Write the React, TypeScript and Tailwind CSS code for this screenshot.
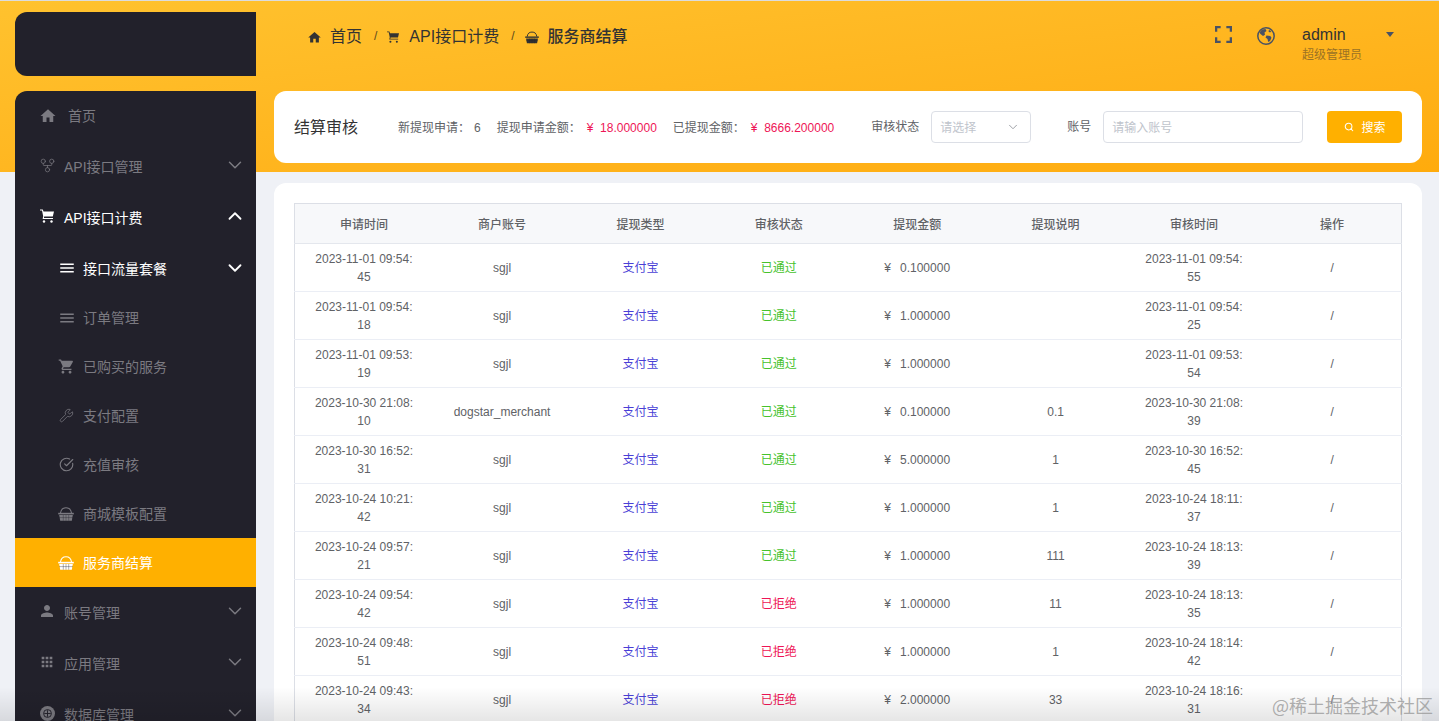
import { ChevronDown, ChevronUp, CircleCheckBig, GitFork, Search, Wrench } from 'lucide-react';
import { MdApps, MdHome, MdMenu, MdPerson, MdShoppingCart } from 'react-icons/md';

function Basket({ className }: { className?: string }) {
  return (
    <svg viewBox="0 0 16 14" className={className} fill="none" stroke="currentColor">
      <path d="M2.500 6C3 2.200 5 0.800 8 0.800s5 1.400 5.500 5.200" strokeWidth="1.100" />
      <path d="M0.200 6.600h15.600" strokeWidth="1.600" />
      <path d="M1.200 8h13.600l-1 5.700H2.200z" fill="currentColor" stroke="none" />
      <path d="M1.200 10.600h13.600M5.300 8v5.700M8 8v5.700M10.700 8v5.700" stroke="#22212b" strokeWidth="0.500" opacity="0.700" />
    </svg>
  );
}

function Cart({ className }: { className?: string }) {
  return (
    <svg viewBox="0 0 14 14" className={className} fill="currentColor">
      <path d="M0 0.500h2.800l0.700 2h10.500l-1.200 5H4.200l-0.300 1.500h9.100v1H2.600l0.600-2.800L2 1.500H0z" />
      <circle cx="4" cy="12.500" r="1.200" />
      <circle cx="11.500" cy="12.500" r="1.200" />
    </svg>
  );
}

function Database({ className }: { className?: string }) {
  return (
    <svg viewBox="0 0 16 16" className={className}>
      <circle cx="8" cy="8" r="8" fill="currentColor" />
      <circle cx="8" cy="8" r="4.200" fill="none" stroke="#22212b" strokeWidth="1" />
      <path d="M8 4.500v7M4.500 8h7" stroke="#22212b" strokeWidth="1" />
    </svg>
  );
}

function Fullscreen({ className }: { className?: string }) {
  return (
    <svg viewBox="0 0 18 18" className={className} fill="none" stroke="currentColor" strokeWidth="2.400">
      <path d="M1.200 6V1.200H6M12 1.200h4.800V6M16.800 12v4.800H12M6 16.800H1.200V12" />
    </svg>
  );
}

function Globe({ className }: { className?: string }) {
  return (
    <svg viewBox="0 0 18 18" className={className} fill="currentColor">
      <circle cx="9" cy="9" r="8.200" fill="none" stroke="currentColor" strokeWidth="1.500" />
      <path d="M5 2.500l3.500-0.500 1 2-2 1.500 0.500 2.200-2 1.200L3.500 7 2.500 5.500z" />
      <path d="M9.500 8.500l3.800 0.500 1.200 1.800-1.500 3.200-1.800 1-0.700-3-2-1.500z" />
      <path d="M12 2.800l2.200 1.600-1.200 1.200-1.500-1z" />
    </svg>
  );
}

const subItems = [
  { label: '订单管理', icon: <MdMenu className="w-[18px] h-[18px] -ml-[1px]" /> },
  { label: '已购买的服务', icon: <MdShoppingCart className="w-[17px] h-[17px] -ml-[1px]" /> },
  { label: '支付配置', icon: <Wrench className="w-[15px] h-[15px]" strokeWidth={1.200} /> },
  { label: '充值审核', icon: <CircleCheckBig className="w-[15px] h-[15px]" strokeWidth={1.800} /> },
  { label: '商城模板配置', icon: <Basket className="w-[16px] h-[14px] -ml-[1px]" /> },
];

const columns = ['申请时间', '商户账号', '提现类型', '审核状态', '提现金额', '提现说明', '审核时间', '操作'];

const rows = [
  { applied: '2023-11-01 09:54:45', account: 'sgjl', ok: true, amount: '0.100000', note: '', reviewed: '2023-11-01 09:54:55' },
  { applied: '2023-11-01 09:54:18', account: 'sgjl', ok: true, amount: '1.000000', note: '', reviewed: '2023-11-01 09:54:25' },
  { applied: '2023-11-01 09:53:19', account: 'sgjl', ok: true, amount: '1.000000', note: '', reviewed: '2023-11-01 09:53:54' },
  { applied: '2023-10-30 21:08:10', account: 'dogstar_merchant', ok: true, amount: '0.100000', note: '0.1', reviewed: '2023-10-30 21:08:39' },
  { applied: '2023-10-30 16:52:31', account: 'sgjl', ok: true, amount: '5.000000', note: '1', reviewed: '2023-10-30 16:52:45' },
  { applied: '2023-10-24 10:21:42', account: 'sgjl', ok: true, amount: '1.000000', note: '1', reviewed: '2023-10-24 18:11:37' },
  { applied: '2023-10-24 09:57:21', account: 'sgjl', ok: true, amount: '1.000000', note: '111', reviewed: '2023-10-24 18:13:39' },
  { applied: '2023-10-24 09:54:42', account: 'sgjl', ok: false, amount: '1.000000', note: '11', reviewed: '2023-10-24 18:13:35' },
  { applied: '2023-10-24 09:48:51', account: 'sgjl', ok: false, amount: '1.000000', note: '1', reviewed: '2023-10-24 18:14:42' },
  { applied: '2023-10-24 09:43:34', account: 'sgjl', ok: false, amount: '2.000000', note: '33', reviewed: '2023-10-24 18:16:31' },
];

function TopItem({ label, icon, open, active }: { label: string; icon: React.ReactNode; open?: boolean; active?: boolean }) {
  return (
    <div className={`flex items-center h-[51px] pl-[25px] pr-[10px] ${active ? 'text-white' : 'text-[#7b7a81]'}`}>
      <span className="w-[24px] flex items-center -mt-[3px]">{icon}</span>
      <span className="flex-1 text-sm mt-[1px]">{label}</span>
      {open ? (
        <ChevronUp className="w-[22px] h-[22px] -mt-[3px]" strokeWidth={2} />
      ) : (
        <ChevronDown className="w-[22px] h-[22px] -mt-[3px]" strokeWidth={1.600} />
      )}
    </div>
  );
}

export default function App() {
  return (
    <div className="relative h-screen overflow-hidden bg-[#eff1f6] font-['Liberation_Sans','Noto_Sans_CJK_SC',sans-serif]">
      {/* Yellow band behind everything */}
      <div className="absolute inset-x-0 top-0 h-[172px] bg-gradient-to-br from-[#ffc22e] to-[#ffab0c] border-t border-[#dcdcdc]" />

      <div className="relative flex h-full">
        {/* Sidebar */}
        <aside className="ml-[15px] w-[241px] pt-3 flex flex-col gap-[15px] shrink-0">
          <div className="h-16 shrink-0 bg-[#22212b] rounded-l-xl" />
          <nav className="flex-1 min-h-0 overflow-hidden bg-[#22212b] rounded-tl-xl">
            <div className="flex items-center h-[50px] pl-6 text-[#7b7a81]">
              <MdHome className="w-[18px] h-[18px]" />
              <span className="ml-[11px] text-sm">首页</span>
            </div>
            <TopItem label="API接口管理" icon={<GitFork className="w-[17px] h-[17px] -ml-[1px]" strokeWidth={1} />} />
            <TopItem label="API接口计费" icon={<Cart className="w-[14px] h-[14px]" />} open active />
            <div className="flex items-center h-[50px] pl-[44px] pr-[10px] text-white">
              <span className="w-[24px] flex items-center"><MdMenu className="w-[18px] h-[18px] -ml-[1px]" /></span>
              <span className="flex-1 text-sm mt-[1px]">接口流量套餐</span>
              <ChevronDown className="w-[22px] h-[22px] -mt-[1px]" strokeWidth={2} />
            </div>
            {subItems.map((item) => (
              <div key={item.label} className="flex items-center h-[49px] pl-[44px] text-[#7b7a81]">
                <span className="w-[24px] flex items-center">{item.icon}</span>
                <span className="text-sm">{item.label}</span>
              </div>
            ))}
            <div className="flex items-center h-[49px] pl-[44px] bg-[#ffb000] text-white">
              <span className="w-[24px] flex items-center"><Basket className="w-[16px] h-[14px] -ml-[1px]" /></span>
              <span className="text-sm">服务商结算</span>
            </div>
            <TopItem label="账号管理" icon={<MdPerson className="w-[18px] h-[18px] -ml-[2px]" />} />
            <TopItem label="应用管理" icon={<MdApps className="w-[16px] h-[16px] -ml-[1px]" />} />
            <TopItem label="数据库管理" icon={<Database className="w-[15px] h-[15px]" />} />
          </nav>
        </aside>

        <main className="ml-[18px] w-[1148px] flex flex-col">
          {/* Top bar */}
          <header className="h-[91px] shrink-0 flex items-start pt-[25px] pl-[33px] text-[#333]">
            <div className="flex items-center h-[22px] mt-[1px] text-base">
              <MdHome className="w-[15px] h-[15px]" />
              <span className="ml-2">首页</span>
              <span className="ml-3 mr-[10px] text-xs text-[#5c4a1c] -mt-[3px]">/</span>
              <Cart className="w-[12px] h-[12px]" />
              <span className="ml-[10px]">API接口计费</span>
              <span className="ml-3 mr-[10px] text-xs text-[#5c4a1c] -mt-[3px]">/</span>
              <Basket className="w-[14px] h-[13px] text-[#333]" />
              <span className="ml-[9px] font-medium">服务商结算</span>
            </div>
            <div className="ml-auto flex items-start">
              <Fullscreen className="w-[17px] h-[17px] mt-[1px] text-[#4a5263]" />
              <Globe className="ml-[25px] w-[18px] h-[18px] mt-[2px] text-[#4a5263]" />
              <div className="ml-[27px] w-[84px]">
                <div className="text-base leading-[18px] mt-[1px] text-[#333]">admin</div>
                <div className="text-xs leading-[14px] mt-[4px] text-[#9b7224]">超级管理员</div>
              </div>
              <span className="mt-[7px] mr-7 border-x-[4.500px] border-x-transparent border-t-[5px] border-t-[#4a5263]" />
            </div>
          </header>

          {/* Filter bar */}
          <section className="h-[72px] shrink-0 bg-white rounded-xl flex items-center whitespace-nowrap pl-5 pr-5 text-xs text-[#606266]">
            <h2 className="text-base text-[#333] font-normal mt-[1px]">结算审核</h2>
            <span className="ml-10 mt-[1px]">新提现申请：</span>
            <span className="ml-1 mt-[1px]">6</span>
            <span className="ml-4 mt-[1px]">提现申请金额：</span>
            <span className="ml-[6px] mt-[1px] text-[#ee1556]">¥&nbsp;&nbsp;18.000000</span>
            <span className="ml-4 mt-[1px]">已提现金额：</span>
            <span className="ml-[6px] mt-[1px] text-[#ee1556]">¥&nbsp;&nbsp;8666.200000</span>
            <span className="ml-[37px] -mt-[1px]">审核状态</span>
            <div className="ml-3 w-[100px] h-8 border border-[#dcdfe6] rounded flex items-center justify-between pl-2 pr-[10px] text-[#c0c4cc]">
              <span className="mt-[1px]">请选择</span>
              <ChevronDown className="w-[14px] h-[14px] text-[#909399]" strokeWidth={1.500} />
            </div>
            <span className="ml-9 -mt-[1px]">账号</span>
            <div className="ml-3 w-[200px] h-8 border border-[#dcdfe6] rounded flex items-center pl-2 text-[#c0c4cc]">
              <span className="mt-[1px]">请输入账号</span>
            </div>
            <button className="ml-6 w-[75px] h-8 bg-[#ffb000] rounded text-white flex items-center justify-center gap-2">
              <Search className="w-[10px] h-[10px]" strokeWidth={2.500} />
              <span className="mt-[1px]">搜索</span>
            </button>
          </section>

          {/* Table card */}
          <section className="mt-5 flex-1 bg-white rounded-t-xl p-5">
            <table className="w-full table-fixed border-collapse text-xs text-[#606266] text-center border border-[#dcdfe6]">
              <thead>
                <tr className="h-10 bg-[#f7f8fa]">
                  {columns.map((col) => (
                    <th key={col} className="font-medium border-b border-[#e4e7ed] pt-[2px]">{col}</th>
                  ))}
                </tr>
              </thead>
              <tbody>
                {rows.map((row) => (
                  <tr key={row.applied} className="h-12 border-b border-[#ebeef5]">
                    <td className="px-[18px] leading-[18px] break-all">{row.applied}</td>
                    <td>{row.account}</td>
                    <td className="text-[#4a3fd6]">支付宝</td>
                    <td className={row.ok ? 'text-[#46c22d]' : 'text-[#ee1556]'}>{row.ok ? '已通过' : '已拒绝'}</td>
                    <td><span className="mr-[9px]">¥</span>{row.amount}</td>
                    <td>{row.note}</td>
                    <td className="px-[18px] leading-[18px] break-all">{row.reviewed}</td>
                    <td>/</td>
                  </tr>
                ))}
              </tbody>
            </table>
          </section>
        </main>
      </div>

      {/* Bottom fade and watermark */}
      <div className="absolute inset-x-0 bottom-0 h-[34px] bg-gradient-to-b from-transparent to-black/10 pointer-events-none" />
      <div className="absolute right-[6px] bottom-[5px] text-lg leading-[22px] text-[#9a9a9a]/80 font-['Noto_Sans_CJK_SC',sans-serif]">@稀土掘金技术社区</div>
    </div>
  );
}
